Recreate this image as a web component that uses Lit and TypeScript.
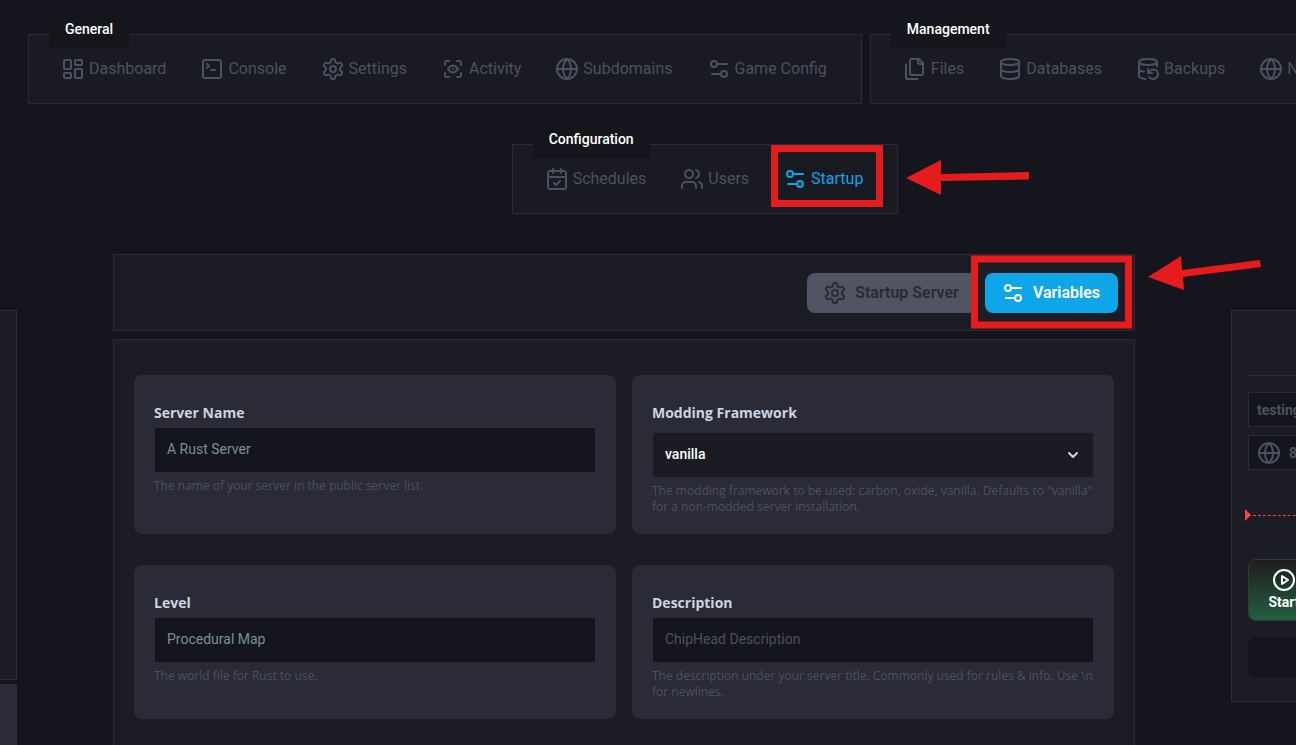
import { LitElement, html, css, svg, nothing } from "lit";
import { customElement, property, state } from "lit/decorators.js";
import { classMap } from "lit/directives/class-map.js";

const GLYPHS: Record<string, unknown> = {
  dashboard: svg`<rect x="3" y="3" width="7" height="9" rx="1"/><rect x="14" y="3" width="7" height="5" rx="1"/><rect x="14" y="12" width="7" height="9" rx="1"/><rect x="3" y="16" width="7" height="5" rx="1"/>`,
  terminal: svg`<path d="m7 11 2-2-2-2"/><path d="M11 13h4"/><rect x="3" y="3" width="18" height="18" rx="2"/>`,
  settings: svg`<path d="M12.22 2h-.44a2 2 0 0 0-2 2v.18a2 2 0 0 1-1 1.73l-.43.25a2 2 0 0 1-2 0l-.15-.08a2 2 0 0 0-2.73.73l-.22.38a2 2 0 0 0 .73 2.73l.15.1a2 2 0 0 1 1 1.72v.51a2 2 0 0 1-1 1.74l-.15.09a2 2 0 0 0-.73 2.73l.22.38a2 2 0 0 0 2.73.73l.15-.08a2 2 0 0 1 2 0l.43.25a2 2 0 0 1 1 1.73V20a2 2 0 0 0 2 2h.44a2 2 0 0 0 2-2v-.18a2 2 0 0 1 1-1.73l.43-.25a2 2 0 0 1 2 0l.15.08a2 2 0 0 0 2.73-.73l.22-.39a2 2 0 0 0-.73-2.73l-.15-.08a2 2 0 0 1-1-1.74v-.5a2 2 0 0 1 1-1.74l.15-.09a2 2 0 0 0 .73-2.73l-.22-.38a2 2 0 0 0-2.73-.73l-.15.08a2 2 0 0 1-2 0l-.43-.25a2 2 0 0 1-1-1.73V4a2 2 0 0 0-2-2z"/><circle cx="12" cy="12" r="3"/>`,
  activity: svg`<path d="M4 8V6a2 2 0 0 1 2-2h2"/><path d="M4 16v2a2 2 0 0 0 2 2h2"/><path d="M16 4h2a2 2 0 0 1 2 2v2"/><path d="M16 20h2a2 2 0 0 0 2-2v-2"/><path d="M7 12c3.333-4.667 6.667-4.667 10 0"/><path d="M7 12c3.333 4.667 6.667 4.667 10 0"/><path d="M12 12h-.01"/>`,
  globe: svg`<circle cx="12" cy="12" r="10"/><path d="M12 2a14.5 14.5 0 0 0 0 20 14.5 14.5 0 0 0 0-20"/><path d="M2 12h20"/>`,
  sliders: svg`<path d="M20 7h-9"/><path d="M14 17H5"/><circle cx="17" cy="17" r="3"/><circle cx="7" cy="7" r="3"/>`,
  files: svg`<path d="M20 7h-3a2 2 0 0 1-2-2V2"/><path d="M9 18a2 2 0 0 1-2-2V4a2 2 0 0 1 2-2h7l4 4v10a2 2 0 0 1-2 2Z"/><path d="M3 7.6v12.8A1.6 1.6 0 0 0 4.6 22h9.8"/>`,
  database: svg`<ellipse cx="12" cy="5" rx="9" ry="3"/><path d="M3 5V19A9 3 0 0 0 21 19V5"/><path d="M3 12A9 3 0 0 0 21 12"/>`,
  backup: svg`<ellipse cx="12" cy="5" rx="9" ry="3"/><path d="M3 12a9 3 0 0 0 5 2.69"/><path d="M21 9.3V5"/><path d="M3 5v14a9 3 0 0 0 6.47 2.88"/><path d="M12 12v4h4"/><path d="M13 20a5 5 0 0 0 9-3 4.5 4.5 0 0 0-4.5-4.5c-1.33 0-2.54.54-3.41 1.41L12 16"/>`,
  calendar: svg`<path d="M8 2v4"/><path d="M16 2v4"/><rect x="3" y="4" width="18" height="18" rx="2"/><path d="M3 10h18"/><path d="m9 16 2 2 4-4"/>`,
  users: svg`<path d="M16 21v-2a4 4 0 0 0-4-4H6a4 4 0 0 0-4 4v2"/><circle cx="9" cy="7" r="4"/><path d="M22 21v-2a4 4 0 0 0-3-3.87"/><path d="M16 3.13a4 4 0 0 1 0 7.75"/>`,
  play: svg`<circle cx="12" cy="12" r="10"/><path d="M10 8l6 4-6 4z"/>`,
  chevron: svg`<path stroke-width="3" d="m6 9 6 6 6-6"/>`,
};

@customElement("ui-icon")
class UiIcon extends LitElement {
  @property() name = "";
  static styles = css`
    :host { display: block; flex: none; width: 24px; height: 24px; }
    svg {
      display: block; width: 100%; height: 100%; fill: none; stroke: currentColor;
      stroke-width: 2; stroke-linecap: round; stroke-linejoin: round;
    }
  `;
  render() {
    return html`<svg viewBox="0 0 24 24" aria-hidden="true">${GLYPHS[this.name]}</svg>`;
  }
}

interface NavItem { icon: string; label: string; active?: boolean; }

@customElement("nav-group")
class NavGroup extends LitElement {
  @property() heading = "";
  @property({ attribute: false }) items: NavItem[] = [];
  static styles = css`
    :host { display: block; flex: none; background: #1a1a23; border: 1px solid #2a2a38; padding-bottom: 22px; }
    .heading {
      width: max-content; margin: -25px 0 9px 20px; padding: 9px 16px; background: #15151c;
      color: #fff; font-size: 14px; font-weight: 500; line-height: 20px;
    }
    .items { display: flex; padding: 0 16px; }
    .item {
      display: flex; align-items: center; gap: 4px; padding: 0 18px 0 16px; position: relative;
      color: #4b5160; font-size: 16px; line-height: 24px; text-decoration: none; white-space: nowrap;
    }
    .active { color: #0ea5e9; }
    .mark { position: absolute; left: 4px; top: -22px; width: 260px; height: 64px; pointer-events: none; }
  `;
  render() {
    return html`
      <h2 class="heading">${this.heading}</h2>
      <nav class="items" aria-label=${this.heading}>
        ${this.items.map((i) => html`
          <a href="#" class=${classMap({ item: true, active: !!i.active })}>
            <ui-icon name=${i.icon}></ui-icon>${i.label}
            ${i.active ? html`<svg class="mark" viewBox="0 0 260 64" aria-hidden="true">
              <rect x="3.5" y="3.5" width="105" height="55" fill="none" stroke="#e61b1b" stroke-width="7"/>
              <path d="M135 33 170 15V29L258 27V34.500L170 36V50z" fill="#e61b1b"/>
            </svg>` : nothing}
          </a>`)}
      </nav>`;
  }
}

interface Field {
  id: string; label: string; help: string; value?: string; placeholder?: string; options?: string[];
}

@customElement("variable-card")
class VariableCard extends LitElement {
  @property({ attribute: false }) field!: Field;
  static styles = css`
    :host { display: block; background: #2b2a37; border-radius: 8px; padding: 28px 20px 19px; }
    .label {
      display: block; margin-bottom: 4px; color: #cbd5e1;
      font: 700 14px/20px "Open Sans", sans-serif;
    }
    .label.spaced { margin-bottom: 9px; }
    .control {
      display: block; box-sizing: border-box; width: 100%; height: 46px; margin: 0; padding: 0 12px 2px;
      border: 1px solid #2a2a38; border-radius: 0; background: #15151d; color: #78909c;
      font: 400 14px/20px Roboto, sans-serif; outline: none; appearance: none;
    }
    .control::placeholder { color: #4b5160; opacity: 1; }
    .select { background: #1b1b24; color: #fff; font-weight: 500; }
    .wrap { position: relative; }
    .chevron { position: absolute; right: 13px; top: 15px; width: 16px; height: 16px; color: #cbd5e1; pointer-events: none; }
    .help { margin: 5px 0 0; color: #4b5160; font: 400 12px/16px "Open Sans", sans-serif; }
  `;
  render() {
    const f = this.field;
    return html`
      <label class=${classMap({ label: true, spaced: !!f.options })} for=${f.id}>${f.label}</label>
      ${f.options
        ? html`<div class="wrap">
            <select class="control select" id=${f.id}>${f.options.map((o) => html`<option>${o}</option>`)}</select>
            <ui-icon class="chevron" name="chevron"></ui-icon>
          </div>`
        : html`<input class="control" id=${f.id} type="text" .value=${f.value ?? ""} placeholder=${f.placeholder ?? ""}>`}
      <p class="help">${f.help}</p>`;
  }
}

@customElement("app-root")
class AppRoot extends LitElement {
  @state() private general: NavItem[] = [
    { icon: "dashboard", label: "Dashboard" },
    { icon: "terminal", label: "Console" },
    { icon: "settings", label: "Settings" },
    { icon: "activity", label: "Activity" },
    { icon: "globe", label: "Subdomains" },
    { icon: "sliders", label: "Game Config" },
  ];
  @state() private management: NavItem[] = [
    { icon: "files", label: "Files" },
    { icon: "database", label: "Databases" },
    { icon: "backup", label: "Backups" },
    { icon: "globe", label: "Network" },
  ];
  @state() private configuration: NavItem[] = [
    { icon: "calendar", label: "Schedules" },
    { icon: "users", label: "Users" },
    { icon: "sliders", label: "Startup", active: true },
  ];
  @state() private fields: Field[] = [
    { id: "name", label: "Server Name", value: "A Rust Server", help: "The name of your server in the public server list." },
    { id: "framework", label: "Modding Framework", options: ["vanilla", "carbon", "oxide"], help: 'The modding framework to be used: carbon, oxide, vanilla. Defaults to "vanilla" for a non-modded server installation.' },
    { id: "level", label: "Level", value: "Procedural Map", help: "The world file for Rust to use." },
    { id: "description", label: "Description", placeholder: "ChipHead Description", help: "The description under your server title. Commonly used for rules & info. Use \\n for newlines." },
  ];

  static styles = css`
    :host {
      display: flex; flex-direction: column; gap: 40px; box-sizing: border-box; min-height: 100vh;
      padding-top: 34px; overflow: hidden; background: #15151e; font-family: Roboto, sans-serif;
    }
    .menus { display: flex; flex-direction: column; align-items: center; gap: 40px; width: max-content; margin-left: 28px; }
    .menu-row { display: flex; gap: 8px; }
    .layout { flex: 1; display: grid; grid-template-columns: 17px minmax(0, 1fr) 65px; column-gap: 96px; }
    .side { padding-top: 56px; }
    .left { display: flex; flex-direction: column; gap: 4px; }
    .panel { box-sizing: border-box; background: #1c1c25; border: 1px solid #2a2a38; }
    .left-top { height: 370px; border-left: 0; }
    .left-bottom { flex: 1; background: #2b2a37; }
    .main { display: flex; flex-direction: column; gap: 8px; }
    .toolbar { display: flex; justify-content: flex-end; gap: 8px; padding: 18px 16px 17px; position: relative; }
    .tab {
      display: flex; align-items: center; gap: 8px; height: 40px; padding: 0 18px 0 16px; border: 0; border-radius: 8px;
      background: #4f5563; color: #2b2a37; font: 600 16px/24px Roboto, sans-serif; white-space: nowrap;
    }
    .tab.on { background: #0ea5e9; color: #fff; }
    .mark { position: absolute; right: -128px; top: -1px; width: 292px; height: 76px; pointer-events: none; }
    .form {
      flex: 1; display: grid; grid-template-columns: 1fr 1fr; gap: 31px 16px; align-content: start;
      padding: 35px 20px 26px;
    }
    .server { width: 280px; padding: 64px 16px 24px; }
    .rule { height: 1px; margin: 0 0 16px; border: 0; background: #2a2a38; }
    .info {
      display: flex; align-items: center; gap: 8px; box-sizing: border-box; height: 35px; margin-bottom: 8px;
      padding: 0 8px; border: 1px solid #2a2a38; background: #15151d; color: #4b5160;
      font-size: 14px; font-weight: 700; line-height: 20px;
    }
    .status { display: flex; align-items: center; gap: 2px; margin: 39px 0 38px -3px; }
    .pointer { border: 6px solid transparent; border-left-color: #ff4040; border-right: 0; }
    .dashes { flex: 1; border-top: 1px dashed #ff4040; }
    .start {
      display: flex; flex-direction: column; align-items: center; box-sizing: border-box; width: 72px; height: 62px;
      margin: 0 0 16px; padding: 8px 0; border: 1px solid #2f3a3e; border-radius: 8px;
      background: linear-gradient(#1f1c1f, #22603f); color: #fff; font: 700 14px/20px Roboto, sans-serif;
    }
    .slot { height: 40px; border-radius: 8px; background: #15151d; }
  `;

  render() {
    return html`
      <header class="menus">
        <div class="menu-row">
          <nav-group heading="General" .items=${this.general}></nav-group>
          <nav-group heading="Management" .items=${this.management}></nav-group>
        </div>
        <nav-group heading="Configuration" .items=${this.configuration}></nav-group>
      </header>
      <div class="layout">
        <aside class="side left">
          <div class="panel left-top"></div>
          <div class="left-bottom"></div>
        </aside>
        <main class="main">
          <div class="panel toolbar">
            <button class="tab" type="button"><ui-icon name="settings"></ui-icon>Startup Server</button>
            <button class="tab on" type="button"><ui-icon name="sliders"></ui-icon>Variables</button>
            <svg class="mark" viewBox="0 0 292 76" aria-hidden="true">
              <rect x="4.500" y="5" width="154" height="66" fill="none" stroke="#e61b1b" stroke-width="7"/>
              <path d="M178 23 211 2 212 16 290 6 291 13 213 23 214 36z" fill="#e61b1b"/>
            </svg>
          </div>
          <form class="panel form">
            ${this.fields.map((f) => html`<variable-card .field=${f}></variable-card>`)}
          </form>
        </main>
        <aside class="side">
          <div class="panel server">
            <hr class="rule">
            <div class="info">testing</div>
            <div class="info"><ui-icon name="globe"></ui-icon>8</div>
            <div class="status"><span class="pointer"></span><span class="dashes"></span></div>
            <button class="start" type="button"><ui-icon name="play"></ui-icon>Start</button>
            <div class="slot"></div>
          </div>
        </aside>
      </div>`;
  }
}
